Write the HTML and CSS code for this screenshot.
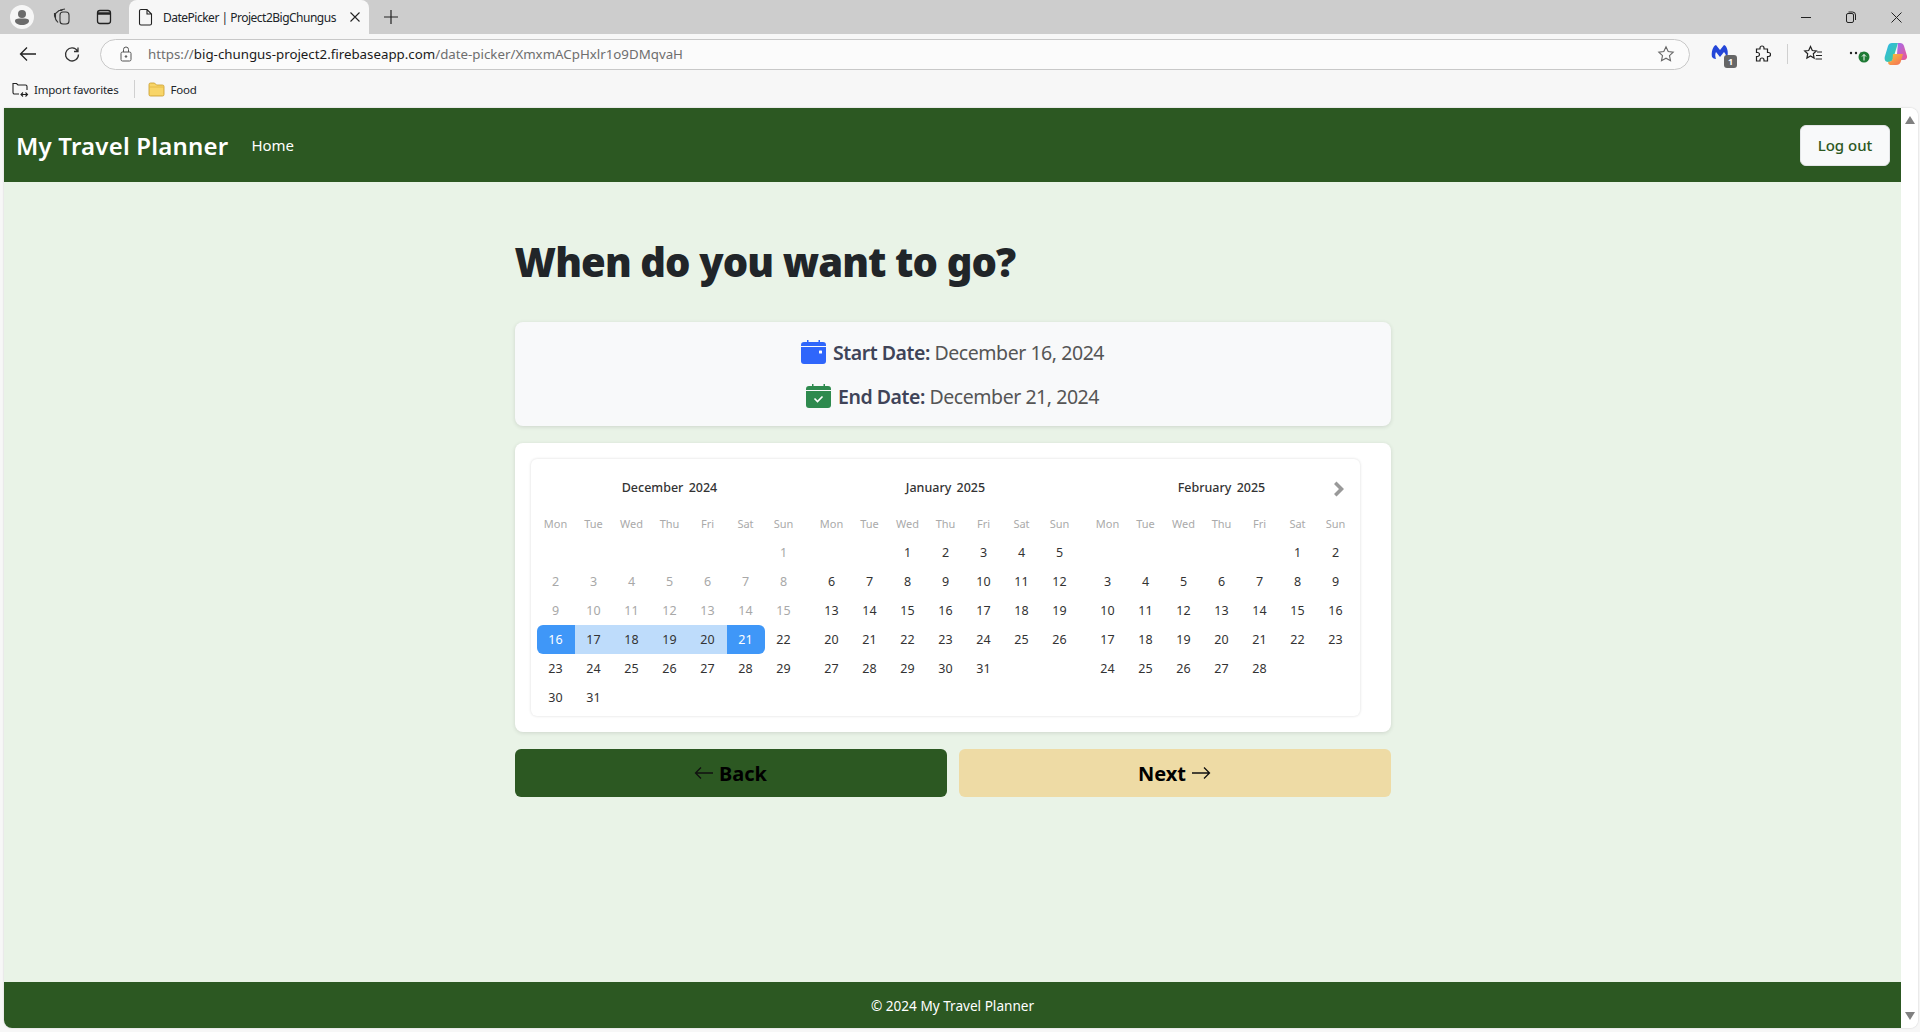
FILE: index.html
```html
<!DOCTYPE html>
<html lang="en">
<head>
  <meta charset="UTF-8">
  <title>DatePicker | Project2BigChungus</title>
  <link rel="stylesheet" href="styles.css">
</head>
<body>
<div class="tabbar">
  <div class="profile">
    <svg width="24" height="24" viewBox="0 0 24 24"><circle cx="12" cy="12" r="12" fill="#f6f6f6"/><circle cx="12" cy="9" r="4" fill="#6b6b6b"/><path d="M5 16c0-2 2-2.500 7-2.500s7 .5 7 2.500c0 2-3 4-7 4s-7-2-7-4z" fill="#6b6b6b"/></svg>
  </div>
  <svg class="tabicon" width="20" height="20" viewBox="0 0 20 20" fill="none" stroke="#333" stroke-width="1.100"><rect x="8" y="5" width="9" height="12" rx="3"/><path d="M6 15.500 3.500 12V6.500L7 3.500h3.500M4.500 14 2.500 9V6M8 3l5-1"/></svg>
  <svg class="tabicon" width="20" height="20" viewBox="0 0 20 20" fill="none" stroke="#222" stroke-width="1.300"><rect x="3.500" y="3.500" width="13" height="13" rx="2.500"/><path d="M3.500 6.500h13" stroke-width="2.500"/></svg>
  <div class="tab">
    <svg width="16" height="18" viewBox="0 0 16 18" fill="none" stroke="#222" stroke-width="1.100"><path d="M3 1.500h6l4.500 4.500v9.500a1.500 1.500 0 0 1-1.500 1.500H3a1.500 1.500 0 0 1-1.500-1.500v-12.500a1.500 1.500 0 0 1 1.500-1.500zM9 1.500v4.500h4.500"/></svg>
    <span class="tabtitle">DatePicker | Project2BigChungus</span>
    <svg class="tabclose" width="10" height="10" viewBox="0 0 10 10" stroke="#222" stroke-width="1.100"><path d="M.5.5l9 9M9.500.5l-9 9"/></svg>
  </div>
  <svg class="newtab" width="14" height="14" viewBox="0 0 14 14" stroke="#222" stroke-width="1.200"><path d="M7 0v14M0 7h14"/></svg>
  <div class="winctl">
    <svg width="10" height="10" viewBox="0 0 10 10" stroke="#222"><path d="M0 5.500h10"/></svg>
    <svg width="10" height="12" viewBox="0 0 10 12" fill="none" stroke="#222"><rect x=".5" y="2.500" width="7" height="9" rx="1.500"/><path d="M2.500 1h4a3 3 0 0 1 3 3v5"/></svg>
    <svg width="11" height="11" viewBox="0 0 11 11" stroke="#222"><path d="M.5.5l10 10M10.500.5l-10 10"/></svg>
  </div>
</div>

<div class="toolbar">
  <svg class="back" width="18" height="16" viewBox="0 0 18 16" fill="none" stroke="#222" stroke-width="1.300"><path d="M17 8H1.500M8 1.500 1.500 8 8 14.500"/></svg>
  <svg class="reload" width="17" height="17" viewBox="0 0 17 17" fill="none" stroke="#333" stroke-width="1.300"><path d="M14 1.500v4h-4M14.500 8.500a6.500 6.500 0 1 1-1-3.500"/></svg>
  <div class="address">
    <svg width="14" height="16" viewBox="0 0 14 16" fill="none" stroke="#555"><rect x="2" y="6" width="10" height="9" rx="1.500"/><path d="M4.500 6V3.500a2.500 2.500 0 0 1 5 0V6"/><circle cx="7" cy="10.500" r=".8" fill="#555"/></svg>
    <span class="url"><span class="url-dim">https://</span>big-chungus-project2.firebaseapp.com<span class="url-dim">/date-picker/XmxmACpHxlr1o9DMqvaH</span></span>
    <svg class="star" width="18" height="18" viewBox="0 0 18 18" fill="none" stroke="#666" stroke-width="1.100"><path d="M9 1.800l2.200 4.700 5 .6-3.700 3.500 1 5.100L9 13.200l-4.500 2.500 1-5.100L1.800 7.100l5-.6z"/></svg>
  </div>
  <div class="toolicons">
    <span class="ext-m">
      <svg width="20" height="20" viewBox="0 0 20 20"><path d="M2 14C1 9 3 3 6 2l4 5 4-5c3 1 5 7 3 13-1-3-2-5-3-6l-4 5-4-5c-1 2-1 4 0 7-2 0-3-1-4-2z" fill="#2446d8"/></svg>
      <span class="ext-badge">1</span>
    </span>
    <svg class="ext-puzzle" width="18" height="18" viewBox="0 0 18 18" fill="none" stroke="#222" stroke-width="1.200"><path d="M7 3a2 2 0 0 1 4 0v1h3.500v3.500h1a2 2 0 0 1 0 4h-1V16H11v-1a2 2 0 0 0-4 0v1H3.500v-4.500h1a2 2 0 0 0 0-4h-1V4H7z"/></svg>
    <span class="tool-sep"></span>
    <svg class="fav" width="20" height="18" viewBox="0 0 20 18" fill="none" stroke="#222" stroke-width="1.200"><path d="M7.500 1.500l1.800 4 4 .5-3 2.800.8 4.200-3.600-2-3.600 2 .8-4.200-3-2.800 4-.5zM14 7h5M13 10.500h6M12.500 14h6.500"/></svg>
    <svg class="more" width="22" height="20" viewBox="0 0 22 20">
      <circle cx="2" cy="9" r="1.200" fill="#222"/><circle cx="7" cy="9" r="1.200" fill="#222"/><circle cx="12" cy="9" r="1.200" fill="#aaa"/>
      <circle cx="15" cy="13" r="5.500" fill="#1f7a35"/><path d="M15 16.500v-6M13 12.500l2-2 2 2" fill="none" stroke="#fff"/>
    </svg>
    <svg class="copilot" width="24" height="24" viewBox="0 0 24 24">
      <defs>
        <linearGradient id="copA" x1="0" y1="0" x2="1" y2="1"><stop offset="0" stop-color="#2fb6f0"/><stop offset="1" stop-color="#3fcf8e"/></linearGradient>
        <linearGradient id="copB" x1="0" y1="0" x2="1" y2="1"><stop offset="0" stop-color="#a06cf0"/><stop offset="1" stop-color="#f0568f"/></linearGradient>
        <linearGradient id="copC" x1="0" y1="0" x2="1" y2="1"><stop offset="0" stop-color="#f9c43a"/><stop offset="1" stop-color="#f46a5a"/></linearGradient>
      </defs>
      <path d="M8 1h6L9 17c-.5 2-2 3-4 3H4c-3 0-4-3-3-6L4 4c.7-2 2-3 4-3z" fill="url(#copA)"/>
      <path d="M14 1h2c2 0 3.500 1 4 3l3 10c.5 2-1 4-3 4h-5l-2-6z" fill="url(#copB)"/>
      <path d="M9 12h10l-2 7c-.7 2.500-2 4-5 4H7c-2 0-3.500-1.500-2.500-3.500 2 .5 3.500-.5 4-2z" fill="url(#copC)"/>
    </svg>
  </div>
</div>

<div class="bookmarks">
  <svg width="18" height="18" viewBox="0 0 18 18" fill="none" stroke="#222" stroke-width="1.100"><path d="M8 14H3.500A1.500 1.500 0 0 1 2 12.500v-9h3.500l1.500 1.500h7.500A1.500 1.500 0 0 1 16 6.500V10M10 14.500h6.500M12 12.500l-2 2 2 2M14.500 12.500l2 2-2 2"/></svg>
  <span class="bm-label">Import favorites</span>
  <span class="bm-sep"></span>
  <svg width="17" height="16" viewBox="0 0 17 16"><path d="M1 3.500A1.500 1.500 0 0 1 2.500 2h4l2 2h6A1.500 1.500 0 0 1 16 5.500v8a1.500 1.500 0 0 1-1.500 1.500h-12A1.500 1.500 0 0 1 1 13.500z" fill="#f8d568" stroke="#c79a2a" stroke-width=".8"/><path d="M1.500 6h14" stroke="#e0b545" stroke-width=".8"/></svg>
  <span class="bm-label">Food</span>
</div>

<div class="window">
  <div class="page">
    <nav class="navbar">
      <span class="brand">My Travel Planner</span>
      <a class="navlink">Home</a>
      <button class="logout">Log out</button>
    </nav>

    <main class="content">
      <h1 class="title">When do you want to go?</h1>

      <div class="dates card-soft">
        <p class="date-line">
          <svg width="25" height="24" viewBox="0 0 25 24"><path d="M6 0h1.500v2h10V0H19v2h3a3 3 0 0 1 3 3v1H0V5a3 3 0 0 1 3-3h3z" fill="#2f66fb"/><path d="M0 7h25v14a3 3 0 0 1-3 3H3a3 3 0 0 1-3-3z" fill="#2f66fb"/><rect x="18" y="10.500" width="3" height="3" rx=".6" fill="#fff"/></svg>
          <span><strong>Start Date:</strong> December 16, 2024</span>
        </p>
        <p class="date-line">
          <svg width="25" height="24" viewBox="0 0 25 24"><path d="M6 0h1.500v2h10V0H19v2h3a3 3 0 0 1 3 3v1H0V5a3 3 0 0 1 3-3h3z" fill="#2e8a4e"/><path d="M0 7h25v14a3 3 0 0 1-3 3H3a3 3 0 0 1-3-3z" fill="#2e8a4e"/><path d="M8.500 14.500l3 3 5-5" fill="none" stroke="#fff" stroke-width="1.600"/></svg>
          <span><strong>End Date:</strong> December 21, 2024</span>
        </p>
      </div>

      <div class="cal-card card-soft">
        <div class="cal">
          <svg class="cal-next" width="12" height="16" viewBox="0 0 12 16"><path d="M1 3l2.500-2.500L11 8l-7.500 7.500L1 13l5-5z" fill="#999"/></svg>

          <div class="month">
            <div class="month-name">December 2024</div>
            <div class="days">
              <span class="wd">Mon</span><span class="wd">Tue</span><span class="wd">Wed</span><span class="wd">Thu</span><span class="wd">Fri</span><span class="wd">Sat</span><span class="wd">Sun</span>
              <span></span><span></span><span></span><span></span><span></span><span></span><span class="off">1</span>
              <span class="off">2</span><span class="off">3</span><span class="off">4</span><span class="off">5</span><span class="off">6</span><span class="off">7</span><span class="off">8</span>
              <span class="off">9</span><span class="off">10</span><span class="off">11</span><span class="off">12</span><span class="off">13</span><span class="off">14</span><span class="off">15</span>
              <span class="sel sel-start">16</span><span class="range">17</span><span class="range">18</span><span class="range">19</span><span class="range">20</span><span class="sel sel-end">21</span><span>22</span>
              <span>23</span><span>24</span><span>25</span><span>26</span><span>27</span><span>28</span><span>29</span>
              <span>30</span><span>31</span>
            </div>
          </div>

          <div class="month">
            <div class="month-name">January 2025</div>
            <div class="days">
              <span class="wd">Mon</span><span class="wd">Tue</span><span class="wd">Wed</span><span class="wd">Thu</span><span class="wd">Fri</span><span class="wd">Sat</span><span class="wd">Sun</span>
              <span></span><span></span><span>1</span><span>2</span><span>3</span><span>4</span><span>5</span>
              <span>6</span><span>7</span><span>8</span><span>9</span><span>10</span><span>11</span><span>12</span>
              <span>13</span><span>14</span><span>15</span><span>16</span><span>17</span><span>18</span><span>19</span>
              <span>20</span><span>21</span><span>22</span><span>23</span><span>24</span><span>25</span><span>26</span>
              <span>27</span><span>28</span><span>29</span><span>30</span><span>31</span>
            </div>
          </div>

          <div class="month">
            <div class="month-name">February 2025</div>
            <div class="days">
              <span class="wd">Mon</span><span class="wd">Tue</span><span class="wd">Wed</span><span class="wd">Thu</span><span class="wd">Fri</span><span class="wd">Sat</span><span class="wd">Sun</span>
              <span></span><span></span><span></span><span></span><span></span><span>1</span><span>2</span>
              <span>3</span><span>4</span><span>5</span><span>6</span><span>7</span><span>8</span><span>9</span>
              <span>10</span><span>11</span><span>12</span><span>13</span><span>14</span><span>15</span><span>16</span>
              <span>17</span><span>18</span><span>19</span><span>20</span><span>21</span><span>22</span><span>23</span>
              <span>24</span><span>25</span><span>26</span><span>27</span><span>28</span>
            </div>
          </div>
        </div>
      </div>

      <div class="actions">
        <button class="btn btn-back">
          <svg width="20" height="14" viewBox="0 0 20 14" fill="none" stroke="#111" stroke-width="1.300"><path d="M19 7H1.500M7 1.500 1.500 7 7 12.500"/></svg>
          Back
        </button>
        <button class="btn btn-next">
          Next
          <svg width="20" height="14" viewBox="0 0 20 14" fill="none" stroke="#111" stroke-width="1.300"><path d="M1 7h17.500M13 1.500 18.500 7 13 12.500"/></svg>
        </button>
      </div>
    </main>

    <footer class="footer">&copy; 2024 My Travel Planner</footer>
  </div>

  <div class="scrollbar">
    <span class="arrow-up"></span>
    <span class="arrow-down"></span>
  </div>
</div>
</body>
</html>
```

FILE: styles.css
```css
* {
  box-sizing: border-box;
}

html, body {
  height: 100%;
}

body {
  margin: 0;
  display: flex;
  flex-direction: column;
  overflow: hidden;
  background-color: #f7f7f7;
  font-family: "Noto Sans", "Open Sans", sans-serif;
  color: #212529;
}

/* browser chrome */
.tabbar {
  height: 34px;
  background-color: #cdcdcd;
  display: flex;
  align-items: center;
  padding-left: 10px;
  flex-shrink: 0;
}

.profile {
  width: 24px;
  height: 24px;
  margin-right: 18px;
  display: flex;
}

.tabicon {
  margin-right: 22px;
}

.tab {
  width: 240px;
  height: 34px;
  margin-left: -7px;
  background-color: #f7f7f7;
  border-radius: 8px 8px 0 0;
  display: flex;
  align-items: center;
  padding: 0 9px;
  gap: 9px;
}

.tabtitle {
  flex: 1;
  font-size: 12px;
  white-space: nowrap;
  letter-spacing: -0.5px;
}

.newtab {
  margin-left: 15px;
}

.winctl {
  margin-left: auto;
  display: flex;
  align-items: center;
  gap: 35px;
  padding-right: 18px;
}

.toolbar {
  height: 40px;
  display: flex;
  align-items: center;
  padding-left: 19px;
  flex-shrink: 0;
}

.reload {
  margin-left: 27px;
}

.address {
  margin-left: 19px;
  width: 1590px;
  height: 31px;
  border: 1px solid #c8c8c8;
  border-radius: 16px;
  background-color: #fbfbfb;
  display: flex;
  align-items: center;
  padding: 0 14px 0 18px;
  gap: 15px;
}

.url {
  font-size: 13.300px;
  flex: 1;
  color: #1a1a1a;
}

.url-dim {
  color: #6e6e6e;
}

.toolicons {
  flex: 1;
  display: flex;
  align-items: center;
  height: 40px;
  padding-left: 20px;
}

.ext-m {
  position: relative;
  width: 24px;
  height: 22px;
}

.ext-badge {
  position: absolute;
  right: -3px;
  bottom: -3px;
  width: 13px;
  height: 13px;
  background-color: #666;
  color: #fff;
  border-radius: 3px;
  font-size: 9px;
  font-weight: 700;
  line-height: 13px;
  text-align: center;
}

.ext-puzzle {
  margin-left: 19px;
}

.tool-sep {
  width: 1px;
  height: 20px;
  background-color: #d0d0d0;
  margin: 0 15px 0 16px;
}

.more {
  margin-left: 26px;
}

.copilot {
  margin-left: 13px;
}

.bookmarks {
  height: 34px;
  display: flex;
  align-items: center;
  padding: 0 0 4px 11px;
  flex-shrink: 0;
}

.bm-label {
  font-size: 11.500px;
  margin-left: 5px;
  letter-spacing: -0.2px;
}

.bm-sep {
  width: 1px;
  height: 18px;
  background-color: #d0d0d0;
  margin: 0 13px 0 16px;
}

/* page */
.window {
  height: 920px;
  margin: 0 2px 0 4px;
  display: flex;
  flex-shrink: 0;
  background-color: #fff;
  border-radius: 0 8px 8px 8px;
  box-shadow: 0 0 2px rgba(0, 0, 0, 0.2);
  overflow: hidden;
}

.page {
  flex: 1;
  display: flex;
  flex-direction: column;
  background-color: #e9f3e7;
}

.navbar {
  height: 74px;
  background-color: #2c5822;
  display: flex;
  align-items: center;
  padding: 0 11px 0 12px;
}

.brand {
  color: #fff;
  font-size: 24px;
  font-weight: 600;
  letter-spacing: 0.2px;
  margin-right: 23px;
}

.navlink {
  color: #fff;
  font-size: 15px;
}

.logout {
  margin-left: auto;
  width: 90px;
  height: 41px;
  background-color: #f8f9fa;
  border: 1px solid #e4e6e8;
  border-radius: 6px;
  color: #2c5822;
  font-family: inherit;
  font-size: 15px;
  font-weight: 500;
}

.content {
  flex: 1;
  width: 876px;
  margin: 0 auto;
}

.title {
  margin: 53px 0 0;
  height: 87px;
  font-size: 40px;
  font-weight: 900;
  line-height: 54px;
  letter-spacing: -0.9px;
}

.card-soft {
  border-radius: 8px;
  box-shadow: 0 1px 4px rgba(0, 0, 0, 0.12);
}

.dates {
  height: 104px;
  background-color: #f8f9fa;
  padding-top: 14px;
}

.date-line {
  margin: 0 0 12px;
  height: 32px;
  display: flex;
  align-items: center;
  justify-content: center;
  gap: 7px;
  font-size: 19.500px;
  letter-spacing: -0.45px;
  color: #555;
  white-space: nowrap;
}

.date-line strong {
  color: #3f4458;
  font-weight: 600;
}

.cal-card {
  height: 289px;
  margin-top: 17px;
  background-color: #fff;
  padding: 16px 31px 16px 16px;
}

.cal {
  position: relative;
  height: 257px;
  border-radius: 6px;
  box-shadow: 0 0 3px rgba(0, 0, 0, 0.15);
  padding: 0 5px 0 6px;
  display: grid;
  grid-template-columns: repeat(3, 266px);
  column-gap: 10px;
}

.cal-next {
  position: absolute;
  right: 15px;
  top: 22px;
}

.month-name {
  height: 50px;
  padding-top: 19px;
  text-align: center;
  font-size: 12.500px;
  font-weight: 500;
  color: #333;
  line-height: 20px;
  word-spacing: 2px;
}

.days {
  display: grid;
  grid-template-columns: repeat(7, 38px);
  grid-auto-rows: 29px;
  font-size: 12.500px;
  color: #333;
}

.days span {
  display: flex;
  align-items: center;
  justify-content: center;
}

.days .wd {
  font-size: 11px;
  color: #aaa;
}

.days .off {
  color: #a8a8a8;
}

.days .range {
  background-color: #bedcfb;
}

.days .sel {
  background-color: #3f97f8;
  color: #fff;
}

.days .sel-start {
  border-radius: 6px 0 0 6px;
}

.days .sel-end {
  border-radius: 0 6px 6px 0;
}

.actions {
  margin-top: 17px;
  display: flex;
  gap: 12px;
}

.btn {
  flex: 1;
  height: 48px;
  border: none;
  border-radius: 6px;
  font-family: inherit;
  font-size: 20px;
  font-weight: 700;
  color: #000;
  display: flex;
  align-items: center;
  justify-content: center;
  gap: 5px;
}

.btn-back {
  background-color: #2c5822;
}

.btn-next {
  background-color: #eedba5;
}

.footer {
  height: 46px;
  background-color: #2c5822;
  color: #fff;
  font-size: 13.600px;
  display: flex;
  align-items: center;
  justify-content: center;
}

.scrollbar {
  width: 17px;
  background-color: #fff;
  display: flex;
  flex-direction: column;
  justify-content: space-between;
  align-items: center;
  padding: 8px 0;
}

.arrow-up {
  border: 5px solid transparent;
  border-top: none;
  border-bottom: 8px solid #808080;
}

.arrow-down {
  border: 5px solid transparent;
  border-bottom: none;
  border-top: 8px solid #808080;
}
```
